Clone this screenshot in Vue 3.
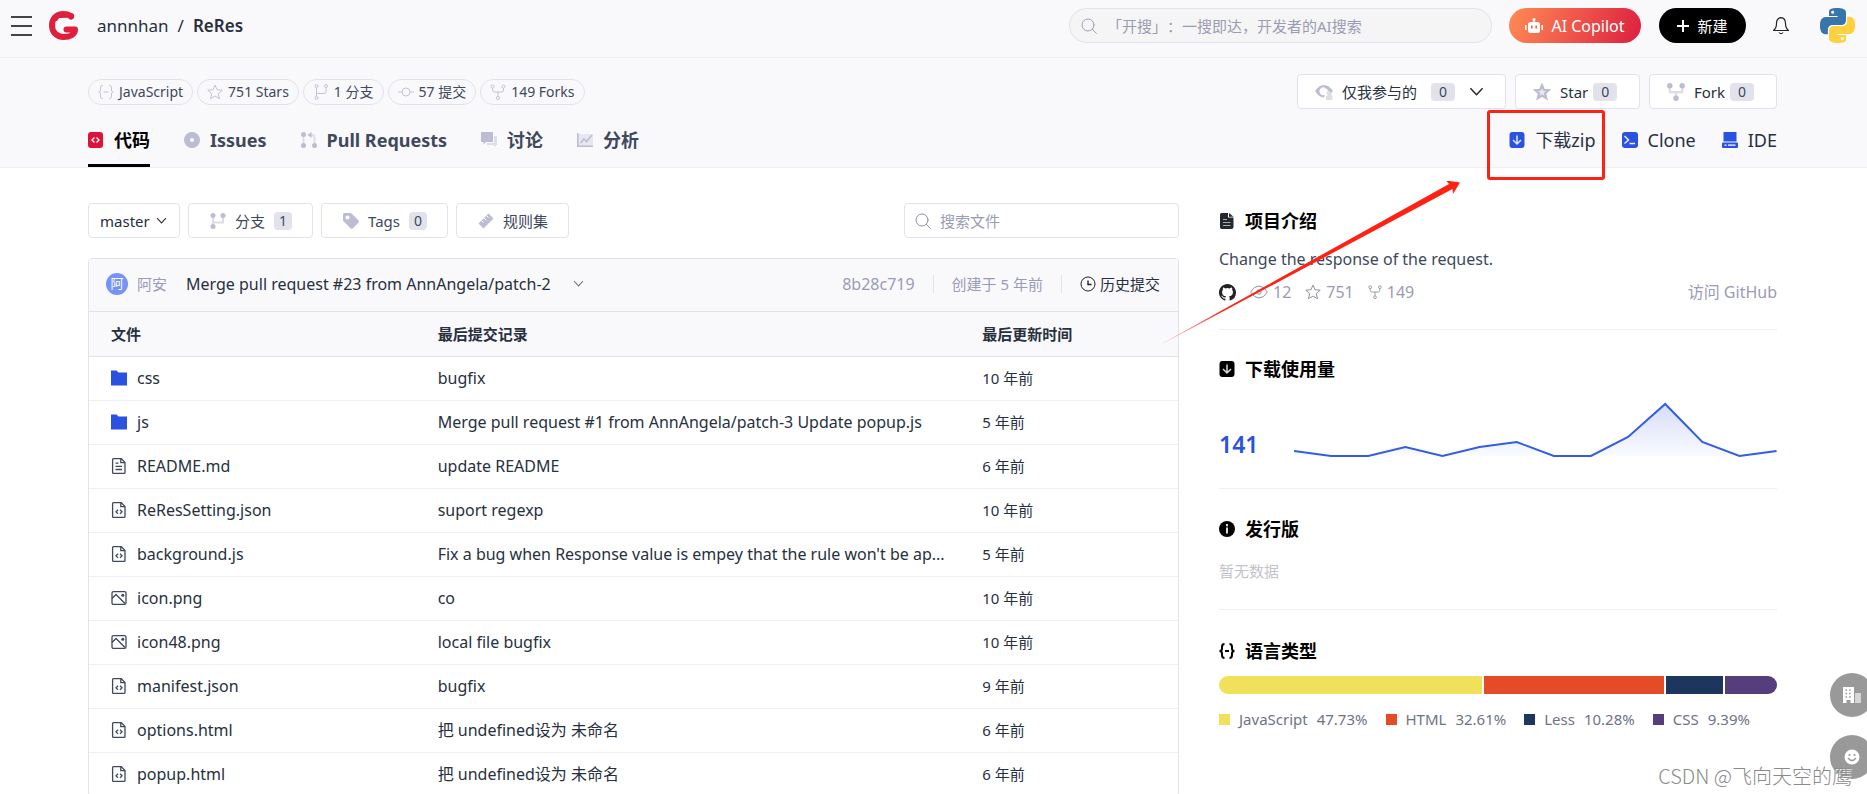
<script setup>
import { ref } from 'vue'

const branch = ref('master')
const keyword = ref('')
const fileKeyword = ref('')

const stats = [
  { icon: 'braces', text: 'JavaScript' },
  { icon: 'star', text: '751 Stars' },
  { icon: 'branch', text: '1 分支' },
  { icon: 'commit', text: '57 提交' },
  { icon: 'fork', text: '149 Forks' },
]

const tabs = [
  { icon: 'code', text: '代码', active: true },
  { icon: 'issue', text: 'Issues' },
  { icon: 'pull', text: 'Pull Requests' },
  { icon: 'chat', text: '讨论' },
  { icon: 'chart', text: '分析' },
]

const refs = [
  { icon: 'branch-solid', text: '分支', count: '1' },
  { icon: 'tag', text: 'Tags', count: '0' },
  { icon: 'ruler', text: '规则集' },
]

const files = [
  { icon: 'folder', name: 'css', message: 'bugfix', time: '10 年前' },
  { icon: 'folder', name: 'js', message: 'Merge pull request #1 from AnnAngela/patch-3 Update popup.js', time: '5 年前' },
  { icon: 'doc', name: 'README.md', message: 'update README', time: '6 年前' },
  { icon: 'doc-code', name: 'ReResSetting.json', message: 'suport regexp', time: '10 年前' },
  { icon: 'doc-code', name: 'background.js', message: "Fix a bug when Response value is empey that the rule won't be ap...", time: '5 年前' },
  { icon: 'image', name: 'icon.png', message: 'co', time: '10 年前' },
  { icon: 'image', name: 'icon48.png', message: 'local file bugfix', time: '10 年前' },
  { icon: 'doc-code', name: 'manifest.json', message: 'bugfix', time: '9 年前' },
  { icon: 'doc-code', name: 'options.html', message: '把 undefined设为 未命名', time: '6 年前' },
  { icon: 'doc-code', name: 'popup.html', message: '把 undefined设为 未命名', time: '6 年前' },
]

const languages = [
  { name: 'JavaScript', share: 47.73, color: '#f1e05a' },
  { name: 'HTML', share: 32.61, color: '#e34c26' },
  { name: 'Less', share: 10.28, color: '#1d365d' },
  { name: 'CSS', share: 9.39, color: '#563d7c' },
]

const usage = [1, 0, 0, 2, 0, 2, 3, 0, 0, 4, 11, 3, 0, 1]
const points = usage.map((v, i) => `${i * 37},${Math.round(54 - v * 4.7)}`).join(' ')
</script>

<template>
  <div class="page">
    <svg class="sprite" aria-hidden="true">
      <symbol id="braces" viewBox="0 0 16 16">
        <path fill="none" stroke="currentColor" stroke-linecap="round" d="M4.500 1.500C2.500 1.500 2.500 2.500 2.500 4v2C2.500 7.300 1.800 8 .7 8c1.100 0 1.800.7 1.800 2v2c0 1.500 0 2.500 2 2.500M11.500 1.500c2 0 2 1 2 2.500v2c0 1.300.7 2 1.800 2-1.100 0-1.800.7-1.800 2v2c0 1.500 0 2.500-2 2.500M6 8h4" />
      </symbol>
      <symbol id="star" viewBox="0 0 16 16">
        <path fill="none" stroke="currentColor" stroke-linejoin="round" d="M8 1l2 4.700 5.200.5-3.900 3.400 1.200 5.100L8 12l-4.500 2.700 1.200-5.100L.8 6.200 6 5.700z" />
      </symbol>
      <symbol id="star-solid" viewBox="0 0 16 16">
        <path fill="currentColor" fill-opacity=".35" stroke="currentColor" stroke-width="2" d="M8 2l1.700 4 4.200.3-3.200 2.900 1 4.300L8 11.200l-3.700 2.300 1-4.300L2.100 6.300 6.300 6z" />
      </symbol>
      <symbol id="branch" viewBox="0 0 16 16">
        <g fill="none" stroke="currentColor"><circle cx="3.500" cy="2" r="1.500" /><circle cx="13" cy="2" r="1.500" /><circle cx="3.500" cy="14" r="1.500" /><path d="M3.500 3.500v9M3.500 9.500H11a2 2 0 0 0 2-2v-4" /></g>
      </symbol>
      <symbol id="branch-solid" viewBox="0 0 16 16">
        <path fill="none" stroke="currentColor" stroke-opacity=".5" stroke-width="2" d="M3 3v10M3 9.500h10V3" />
        <g fill="currentColor"><circle cx="3" cy="2.500" r="2.500" /><circle cx="13" cy="2.500" r="2.500" /><circle cx="3" cy="13.500" r="2.500" /></g>
      </symbol>
      <symbol id="commit" viewBox="0 0 16 16">
        <g fill="none" stroke="currentColor"><circle cx="8" cy="8" r="4" /><path d="M0 8h4M12 8h4" /></g>
      </symbol>
      <symbol id="fork" viewBox="0 0 16 16">
        <g fill="none" stroke="currentColor"><circle cx="2.500" cy="2.500" r="1.600" /><circle cx="13.500" cy="2.500" r="1.600" /><circle cx="8" cy="14" r="1.600" /><path d="M2.500 4v2q0 2 2 2h7q2 0 2-2V4M8 8v4.400" /></g>
      </symbol>
      <symbol id="fork-solid" viewBox="0 0 16 16">
        <path fill="none" stroke="currentColor" stroke-opacity=".5" stroke-width="2" d="M2.500 3v5h11V3M8 8v6" />
        <g fill="currentColor"><circle cx="2.500" cy="2.500" r="2.400" /><circle cx="13.500" cy="2.500" r="2.400" /><circle cx="8" cy="13.600" r="2.400" /></g>
      </symbol>
      <symbol id="code" viewBox="0 0 16 16">
        <rect width="15" height="16" rx="3" fill="#dc143c" /><path fill="none" stroke="#fff" stroke-width="1.300" d="M6.500 5.500L4 8l2.500 2.500M8.500 5.500L11 8l-2.500 2.500" />
      </symbol>
      <symbol id="issue" viewBox="0 0 16 16"><circle cx="8" cy="8" r="5" fill="none" stroke="currentColor" stroke-width="6" /></symbol>
      <symbol id="pull" viewBox="0 0 16 16">
        <path fill="none" stroke="currentColor" stroke-opacity=".45" stroke-width="2" d="M2.500 3v10M9 3h2q2.500 0 2.500 3v7" />
        <g fill="currentColor"><circle cx="2.500" cy="2.500" r="2.500" /><circle cx="2.500" cy="13.500" r="2.500" /><circle cx="13.500" cy="13.500" r="2.500" /><path d="M10.500 0v6L6.500 3z" /></g>
      </symbol>
      <symbol id="chat" viewBox="0 0 16 16">
        <path fill="currentColor" d="M0 0h12v10H5l-2.500 2.500V10H0z" /><path fill="currentColor" fill-opacity=".45" d="M13 4h3v9h-1.500v2.500L12 13H6v-2h7z" />
      </symbol>
      <symbol id="chart" viewBox="0 0 16 16">
        <path fill="currentColor" fill-opacity=".3" d="M1 2h15v12H1z" /><path fill="none" stroke="currentColor" stroke-width="1.600" d="M.8 1v13.200H16M3.500 11L7 7l2.500 2.500L15 3" />
      </symbol>
      <symbol id="tag" viewBox="0 0 16 16">
        <path fill="currentColor" fill-rule="evenodd" d="M1.500 0H7q1 0 1.600.6l7 7q.8.900 0 1.800l-6 6q-.9.800-1.800 0l-7-7Q0 7.800 0 7V1.500Q0 0 1.500 0zM4.500 2.500a2 2 0 1 0 0 4 2 2 0 0 0 0-4z" />
      </symbol>
      <symbol id="ruler" viewBox="0 0 16 16">
        <path fill="currentColor" d="M10.500.5l5 5-10 10-5-5z" /><path stroke="#fff" d="M8.500 2.500l2 2M6 5l2.500 2.500M3.500 7.500l2 2" />
      </symbol>
      <symbol id="search" viewBox="0 0 16 16"><g fill="none" stroke="currentColor" stroke-linecap="round"><circle cx="7" cy="7" r="6" /><path d="M11.300 11.300L15.500 15.500" /></g></symbol>
      <symbol id="chevron" viewBox="0 0 16 16"><path fill="none" stroke="currentColor" stroke-width="1.500" d="M1.500 4.500L8 11.500l6.500-7" /></symbol>
      <symbol id="folder" viewBox="0 0 16 16"><path fill="#2a52e0" d="M0 .5h5.500L7.500 2.500H16v13H0z" /></symbol>
      <symbol id="doc" viewBox="0 0 16 16">
        <g fill="none" stroke="#40485b" stroke-width="1.300"><path d="M2.500.7h7.800l3.700 3.700v10q0 .9-.9.900H2.500q-.9 0-.9-.9V1.600q0-.9.9-.9z" /><path d="M9.800.7v4H14" /><path d="M4.500 5.200h3M4.500 8.300h6.500M4.500 11.500h6.500" /></g>
      </symbol>
      <symbol id="doc-code" viewBox="0 0 16 16">
        <g fill="none" stroke="#40485b" stroke-width="1.300"><path d="M2.500.7h7.800l3.700 3.700v10q0 .9-.9.900H2.500q-.9 0-.9-.9V1.600q0-.9.9-.9z" /><path d="M9.800.7v4H14" /><path d="M7 7.700L5 9.800l2 2.100M9 7.700l2 2.100-2 2.100" /></g>
      </symbol>
      <symbol id="image" viewBox="0 0 16 16">
        <rect x="1" y="1.600" width="14" height="12.800" rx="1.500" fill="none" stroke="#40485b" stroke-width="1.300" /><path fill="none" stroke="#40485b" stroke-width="1.300" d="M1 8.500l4-4 9 9" /><circle cx="11.800" cy="5.300" r="1.500" fill="#40485b" />
      </symbol>
      <symbol id="download" viewBox="0 0 16 16">
        <rect x=".5" width="15" height="16" rx="3" fill="currentColor" /><path fill="none" stroke="#fff" stroke-opacity=".85" stroke-width="1.500" d="M8 3.500v8M4 8l4 4 4-4" />
      </symbol>
      <symbol id="terminal" viewBox="0 0 16 16">
        <rect width="16" height="16" rx="3" fill="currentColor" /><path fill="none" stroke="#fff" stroke-width="1.500" stroke-opacity=".9" d="M2.500 4L6.500 8l-4 3.500M7.500 11.500H13" />
      </symbol>
      <symbol id="ide" viewBox="0 0 16 16"><path fill="currentColor" d="M1.500 0h13v9.500h-13zM1 10.500h14q1 0 1 1V15q0 1-1 1H1q-1 0-1-1v-3.500q0-1 1-1z" /><path stroke="#fff" stroke-width="1.300" d="M2.500 13.200h2M6 13.200h7.500" /></symbol>
    </svg>

    <header class="topbar">
      <button class="menu" type="button" aria-label="菜单"><i></i><i></i><i></i></button>
      <a class="logo" href="#" aria-label="Gitee">
        <svg viewBox="0 0 29 29" width="29" height="29"><path fill="none" stroke="#e01f3d" stroke-width="6" stroke-linecap="round" stroke-linejoin="round" d="M22 5Q18.500 3 14.500 3C7 3 3 8 3 14.500S7.500 26 14.500 26 26 23 26 18.500H17.500" /><path fill="#e01f3d" d="M4 9L12 1l12 1.500q2.500 3 0 5.500-3 2-5-1.500l-6 .5-3 0-2 3z" /></svg>
      </a>
      <nav class="crumbs"><a href="#">annnhan</a><span>/</span><a href="#" class="repo">ReRes</a></nav>
      <label class="global-search">
        <svg class="ic16"><use href="#search" /></svg>
        <input v-model="keyword" type="text" aria-label="搜索" placeholder="「开搜」：一搜即达，开发者的AI搜索" />
      </label>
      <button class="copilot" type="button">
        <svg viewBox="0 0 18 16" width="18" height="16"><path fill="#fff" d="M5.500 4h7q2.500 0 2.500 2.500v6q0 2.500-2.500 2.500h-7Q3 15 3 12.500v-6Q3 4 5.500 4zM0 7h1.500v5H0zM16.500 7H18v5h-1.500zM8.300 1h1.400v3H8.300z" /><circle cx="9" cy="1.500" r="1.500" fill="#fff" /><path stroke="#f0674e" stroke-width="1.600" d="M6.800 7.500v3M11.200 7.500v3" /></svg>
        AI Copilot
      </button>
      <button class="create" type="button">
        <svg viewBox="0 0 12 12" width="12" height="12"><path stroke="#fff" stroke-width="2" d="M6 0v12M0 6h12" /></svg>
        新建
      </button>
      <button class="bell" type="button" aria-label="通知">
        <svg viewBox="0 0 16 18" width="16" height="18"><path fill="none" stroke="#222" stroke-width="1.200" d="M8 .7C4.500 1 3.500 3.500 3.500 6.500c0 4-1 5.500-3 7h15c-2-1.500-3-3-3-7C12.500 3.500 11.500 1 8 .7zM6 15.500q2 2.500 4 0" /></svg>
      </button>
      <a class="avatar" href="#" aria-label="个人主页">
        <svg viewBox="0 0 24 24" width="35" height="35">
          <defs><path id="py" d="M14.250.18l.9.2.73.26.59.3.45.32.34.34.25.34.16.33.1.3.04.26.02.2-.01.13V8.500l-.05.63-.13.55-.21.46-.26.38-.3.31-.33.25-.35.19-.35.14-.33.1-.3.07-.26.04-.21.02H8.770l-.69.05-.59.14-.5.22-.41.27-.33.32-.27.35-.2.36-.15.37-.1.35-.07.32-.04.27-.02.21v3.060H3.170l-.21-.03-.28-.07-.32-.12-.35-.18-.36-.26-.36-.36-.35-.46-.32-.59-.28-.73-.21-.88-.14-1.050-.05-1.230.06-1.220.16-1.040.24-.87.32-.71.36-.57.4-.44.42-.33.42-.24.4-.16.36-.1.32-.05.24-.01h.16l.06.01h8.160v-.83H6.180l-.01-2.750-.02-.37.05-.34.11-.31.17-.28.25-.26.31-.23.38-.2.44-.18.51-.15.58-.12.64-.1.71-.06.77-.04.84-.02 1.270.05zm-6.300 1.980l-.23.33-.08.41.08.41.23.34.33.22.41.09.41-.09.33-.22.23-.34.08-.41-.08-.41-.23-.33-.33-.22-.41-.09-.41.09z" /></defs>
          <circle cx="12" cy="12" r="12" fill="#fff" /><use href="#py" fill="#3776ab" /><use href="#py" fill="#ffd040" transform="rotate(180 12 12)" />
        </svg>
      </a>
    </header>

    <section class="hero">
      <div class="hero-row">
        <ul class="pills">
          <li v-for="s in stats" :key="s.icon"><svg class="ic16"><use :href="'#' + s.icon" /></svg>{{ s.text }}</li>
        </ul>
        <div class="actions">
          <button type="button" class="watch">
            <svg viewBox="0 0 18 16" width="18" height="16"><path fill="currentColor" d="M0 7Q4 1 9 1t9 6l-2 1.500-3-2.500-3.500-2.500A4 4 0 1 0 10 11l-1 2.500Q4 13.500 0 7z" /><path fill="currentColor" fill-opacity=".5" d="M11 16v-3q0-2 2-2a2.500 2.500 0 1 1 2.500 0q2 0 2 2v3z" /></svg>
            仅我参与的<b>0</b><svg class="caret"><use href="#chevron" /></svg>
          </button>
          <button type="button" class="star"><svg class="ic18"><use href="#star-solid" /></svg>Star<b>0</b></button>
          <button type="button" class="forks"><svg class="ic18"><use href="#fork-solid" /></svg>Fork<b>0</b></button>
        </div>
      </div>
      <div class="hero-row tabs-row">
        <nav class="tabs">
          <a v-for="t in tabs" :key="t.icon" href="#" :class="{ active: t.active }"><svg class="ic16"><use :href="'#' + t.icon" /></svg>{{ t.text }}</a>
        </nav>
        <nav class="tools">
          <a href="#" class="zip"><svg class="ic16"><use href="#download" /></svg>下载zip<span class="frame"></span></a>
          <a href="#"><svg class="ic16"><use href="#terminal" /></svg>Clone</a>
          <a href="#"><svg class="ic16"><use href="#ide" /></svg>IDE</a>
        </nav>
      </div>
    </section>

    <main class="content">
      <div class="primary">
        <div class="toolbar">
          <label class="branch"><select v-model="branch" aria-label="分支"><option>master</option></select><svg><use href="#chevron" /></svg></label>
          <a v-for="r in refs" :key="r.icon" href="#" class="ref"><svg class="ic16"><use :href="'#' + r.icon" /></svg>{{ r.text }}<b v-if="r.count">{{ r.count }}</b></a>
          <label class="file-search"><svg class="ic16"><use href="#search" /></svg><input v-model="fileKeyword" type="text" aria-label="搜索文件" placeholder="搜索文件" /></label>
        </div>

        <div class="listing">
          <div class="last-commit">
            <span class="face">阿</span><a href="#" class="muted author">阿安</a>
            <a href="#" class="subject">Merge pull request #23 from AnnAngela/patch-2</a>
            <button type="button" aria-label="展开"><svg width="11" height="11"><use href="#chevron" /></svg></button>
            <span class="meta muted hash">8b28c719</span>
            <span class="meta muted">创建于 5 年前</span>
            <a href="#" class="meta history"><svg viewBox="0 0 16 16" class="ic16"><g fill="none" stroke="#222"><circle cx="8" cy="8" r="7" /><path stroke-width="1.400" d="M8 4.500V8.500h3.500" /></g></svg>历史提交</a>
          </div>
          <table>
            <thead><tr><th class="c-name">文件</th><th class="c-msg">最后提交记录</th><th>最后更新时间</th></tr></thead>
            <tbody>
              <tr v-for="f in files" :key="f.name">
                <td><a href="#" class="file"><svg class="ic16"><use :href="'#' + f.icon" /></svg>{{ f.name }}</a></td>
                <td><a href="#">{{ f.message }}</a></td>
                <td class="time">{{ f.time }}</td>
              </tr>
            </tbody>
          </table>
        </div>
      </div>

      <aside class="side">
        <section class="about">
          <h2><svg viewBox="0 0 16 16" class="ic16"><path fill="#24292f" d="M2.500 0H9v4.500h5.500V14q0 2-2 2h-10q-1.500 0-1.500-2V1.500Q1 0 2.500 0zM10 0l4.500 3.700H10z" /><path stroke="#aaa" d="M4 6.500h4M4 9.500h7.500M4 12.500h7.500" /></svg>项目介绍</h2>
          <p class="intro">Change the response of the request.</p>
          <div class="upstream">
            <svg viewBox="0 0 16 16" width="17" height="17"><path fill="#222" d="M8 0C3.580 0 0 3.580 0 8c0 3.540 2.290 6.530 5.470 7.590.4.070.55-.17.55-.38 0-.19-.01-.82-.01-1.490-2.010.37-2.530-.49-2.690-.94-.09-.23-.48-.94-.82-1.130-.28-.15-.68-.52-.01-.53.63-.01 1.080.58 1.230.82.72 1.210 1.870.87 2.330.66.070-.52.28-.87.51-1.070-1.780-.2-3.640-.89-3.640-3.950 0-.87.31-1.590.82-2.150-.08-.2-.36-1.020.08-2.120 0 0 .67-.21 2.200.82a7.600 7.600 0 0 1 4 0c1.530-1.040 2.200-.82 2.200-.82.44 1.100.16 1.920.08 2.120.51.56.82 1.270.82 2.150 0 3.070-1.870 3.750-3.650 3.950.29.25.54.73.54 1.480 0 1.070-.01 1.930-.01 2.200 0 .21.15.46.55.38A8 8 0 0 0 16 8c0-4.420-3.580-8-8-8z" /></svg>
            <span><svg viewBox="0 0 18 16" width="18" height="16"><g fill="none" stroke="currentColor"><path d="M.7 8Q4 2 9 2t8.300 6Q14 14 9 14T.7 8z" /><circle cx="9" cy="8" r="2.200" /></g></svg>12</span>
            <span><svg class="ic16"><use href="#star" /></svg>751</span>
            <span><svg width="14" height="14"><use href="#fork" /></svg>149</span>
            <a href="#">访问 GitHub</a>
          </div>
        </section>
        <section class="downloads">
          <h2><svg class="ic16"><use href="#download" /></svg>下载使用量</h2>
          <div class="usage">
            <strong>141</strong>
            <svg viewBox="0 0 481 56" preserveAspectRatio="none">
              <defs><linearGradient id="fade" x1="0" y1="0" x2="0" y2="1"><stop offset="0" stop-color="#d5dcf9" /><stop offset="1" stop-color="#fafbff" /></linearGradient></defs>
              <polygon :points="'0,54 ' + points + ' 481,54'" fill="url(#fade)" /><polyline :points="points" fill="none" stroke="#355ce4" stroke-width="2" />
            </svg>
          </div>
        </section>
        <section class="release">
          <h2><svg viewBox="0 0 16 16" class="ic16"><circle cx="8" cy="8" r="8" /><path stroke="#ddd" stroke-width="2" d="M8 3v2.200M8 6.500v6" /></svg>发行版</h2>
          <p class="empty">暂无数据</p>
        </section>
        <section class="langs">
          <h2><svg viewBox="0 0 16 16" class="ic16"><path fill="none" stroke="#000" stroke-width="2" d="M5.500 1Q3 1 3 4v1.500Q3 8 .5 8 3 8 3 10.500V12q0 3 2.500 3M10.500 1Q13 1 13 4v1.500Q13 8 15.500 8 13 8 13 10.500V12q0 3-2.500 3M6 8h4" /></svg>语言类型</h2>
          <div class="bar"><i v-for="l in languages" :key="l.name" :style="{ flexGrow: l.share, background: l.color }"></i></div>
          <ul><li v-for="l in languages" :key="l.name"><i :style="{ background: l.color }"></i><span>{{ l.name }}</span><span>{{ l.share }}%</span></li></ul>
        </section>
      </aside>
      <svg class="arrow" viewBox="0 0 300 164" width="300" height="164" aria-hidden="true">
        <defs><linearGradient id="ink" gradientUnits="userSpaceOnUse" x1="0" y1="162" x2="60" y2="130"><stop offset="0" stop-color="#fe2215" stop-opacity=".2" /><stop offset="1" stop-color="#fe2215" /></linearGradient></defs>
        <path fill="url(#ink)" d="M1 162L287 3l-3-3.500L298 1.500 291 13l-.5-5L1 162.500z" />
      </svg>
    </main>

    <div class="float">
      <button type="button" aria-label="企业版"><svg viewBox="0 0 18 16" width="18" height="16"><path fill="#fff" d="M0 0h11v16H7.500v-3h-4v3H0z" /><path fill="#fff" fill-opacity=".6" d="M12 6h6v10h-6z" /><path stroke="#999" stroke-width="1.600" stroke-dasharray="1.600 2" d="M2.500 3h7M2.500 6.500h7M2.500 10h7" /></svg></button>
      <button type="button" aria-label="反馈"><svg class="ic16" viewBox="0 0 16 16"><circle cx="8" cy="8" r="7.500" fill="#fff" /><g fill="#999"><circle cx="5.500" cy="6" r="1.100" /><circle cx="10.500" cy="6" r="1.100" /></g><path fill="none" stroke="#999" stroke-width="1.300" d="M4 9q4 5 8 0" /></svg></button>
    </div>
    <div class="watermark">CSDN @飞向天空的鹰</div>
  </div>
</template>

<style>
body { margin: 0; background: #fff; }
</style>

<style scoped>
.page {
  position: relative; height: 100vh; overflow: hidden; background: #fff; color: #27303d;
  font-family: "Noto Sans", "Noto Sans CJK SC", sans-serif; font-size: 15px; line-height: 20px;
}
.page * { box-sizing: border-box; }
.sprite { position: absolute; width: 0; height: 0; }
svg { display: block; flex: none; }
a { color: inherit; text-decoration: none; }
button, input, select { font: inherit; color: inherit; margin: 0; padding: 0; border: 0; background: none; outline: 0; }
ul { list-style: none; margin: 0; padding: 0; }
.ic16 { width: 16px; height: 16px; }
.ic18 { width: 18px; height: 18px; }
.muted { color: #9a9bb4; }

.topbar { display: flex; align-items: center; height: 58px; padding: 0 12px 6px 11px; background: #f9f9fc; border-bottom: 1px solid #efeff5; }
.menu { display: flex; flex-direction: column; gap: 7px; width: 21px; }
.menu i { height: 2px; background: #444; }
.logo { margin-left: 17px; }
.crumbs { display: flex; gap: 9px; margin-left: 19px; font-size: 17px; line-height: 24px; }
.repo { font-weight: 600; }
.global-search { display: flex; align-items: center; gap: 10px; width: 423px; height: 35px; margin-left: auto; padding: 0 11px; border: 1px solid #e2e2ee; border-radius: 18px; background: #f5f5f5; color: #a0a0b8; text-spacing-trim: space-all; }
.global-search input, .file-search input { flex: 1; min-width: 0; }
input::placeholder { color: #9a9bb4; opacity: 1; }
.copilot, .create { display: flex; align-items: center; justify-content: center; gap: 8px; height: 35px; border-radius: 18px; color: #fff; }
.copilot { width: 132px; margin-left: 17px; background: linear-gradient(110deg, #ff8b55, #dc1f3f); font-size: 16px; }
.create { width: 87px; margin-left: 18px; background: #000; }
.bell { margin-left: 27px; }
.avatar { margin-left: 31px; }

.hero { padding: 16px 90px 0 88px; background: #f9f9fc; border-bottom: 1px solid #efeff5; }
.hero-row { display: flex; justify-content: space-between; align-items: center; }
.pills { display: flex; gap: 4px; font-size: 14px; }
.pills li { display: flex; align-items: center; gap: 5px; height: 26px; padding: 0 9px; border: 1px solid #e2e2ee; border-radius: 13px; color: #40485b; }
.pills svg { color: #c3c3d8; }
.actions { display: flex; gap: 9px; }
.actions button { display: flex; align-items: center; height: 35px; border: 1px solid #e2e2ee; border-radius: 4px; background: #fff; padding-left: 17px; }
.actions svg { margin-right: 9px; color: #bcbcd2; }
b { padding: 0 5px; border-radius: 4px; background: #e2e2ec; color: #40485b; font-size: 14px; line-height: 18px; font-weight: 400; }
.actions .watch { width: 209px; padding-left: 17px; }
.watch b { margin-left: 14px; padding: 0 8px; }
.actions .caret { width: 15px; height: 15px; margin: 0 0 0 14px; color: #222; }
.actions .star { width: 125px; }
.actions .forks { width: 128px; }
.star b, .forks b { margin-left: 5px; padding: 0 8px; }
.tabs-row { margin-top: 4px; }
.tabs, .tools { display: flex; font-size: 18px; }
.tabs { gap: 34px; color: #40485b; font-weight: 700; }
.tabs a, .tools a { display: flex; align-items: center; gap: 10px; height: 54px; }
.tabs a { padding-top: 2px; border-bottom: 3px solid transparent; }
.tabs svg { color: #bcbcd2; }
.tabs .active { color: #000; border-color: #000; }
.tools { gap: 26px; }
.tools svg { color: #2a52e0; }
.zip { position: relative; }
.frame { position: absolute; inset: -3px -9px -13px -22px; border: 3px solid #fe2215; border-radius: 3px; }

.content { position: relative; display: flex; gap: 40px; padding: 35px 90px 0 88px; }
.primary { flex: 1; min-width: 0; }
.side { width: 34%; max-width: 558px; }
.toolbar { display: flex; gap: 8px; height: 35px; margin-bottom: 20px; }
.branch, .ref, .file-search { display: flex; align-items: center; border: 1px solid #e2e2ee; border-radius: 4px; }
.branch { position: relative; width: 92px; }
.branch select { width: 100%; height: 33px; padding-left: 11px; appearance: none; }
.branch svg { position: absolute; right: 12px; width: 11px; height: 11px; pointer-events: none; }
.ref { gap: 9px; padding: 0 20px 0 21px; color: #40485b; }
.ref svg { color: #bcbcd2; }
.file-search { gap: 9px; width: 275px; margin-left: auto; padding: 0 10px; color: #8c92a4; }

.listing { border: 1px solid #e2e2ec; border-radius: 4px; overflow: hidden; }
.last-commit { display: flex; align-items: center; height: 53px; padding: 0 18px 3px 17px; background: #f9f9fc; border-bottom: 1px solid #e2e2ec; }
.face { width: 22px; height: 22px; border-radius: 50%; background: #7893f7; color: #fff; font-size: 13px; line-height: 21px; text-align: center; }
.author { margin: 0 19px 0 9px; }
.subject, .hash, td, .intro, .upstream { font-size: 16px; }
.last-commit button { margin: 0 auto 0 22px; color: #777; }
.meta { padding-left: 18px; line-height: 18px; }
.meta + .meta { margin-left: 18px; border-left: 1px solid #e2e2ec; }
.history { display: flex; align-items: center; gap: 4px; }
table { width: 100%; table-layout: fixed; border-collapse: collapse; }
th, td { padding: 0 0 0 22px; text-align: left; white-space: nowrap; }
th { height: 44px; background: #f9f9fc; border-bottom: 1px solid #e2e2ec; font-weight: 700; }
td { height: 44px; border-bottom: 1px solid #efeff3; }
td.time { font-size: 15px; }
tr:last-child td { border-bottom: 0; }
.c-name { width: 30%; }
.c-msg { width: 50%; }
.file { display: flex; align-items: center; gap: 10px; }

.side section { border-bottom: 1px solid #efeff3; }
h2 { display: flex; align-items: center; gap: 10px; margin: 0; font-size: 18px; line-height: 26px; font-weight: 700; color: #000; }
.about { height: 127px; padding-top: 5px; }
.intro { margin: 15px 0 0; color: #40485b; }
.upstream { display: flex; align-items: center; margin-top: 13px; color: #9a9bb4; }
.upstream span { display: flex; align-items: center; gap: 5px; margin-left: 14px; }
.upstream svg { color: #8c92a4; }
.upstream a { margin-left: auto; }
.downloads { height: 159px; padding-top: 26px; }
.usage { display: flex; align-items: center; gap: 36px; margin-top: 20px; }
.usage strong { padding-top: 28px; color: #2a52e0; font-size: 23px; line-height: 28px; font-weight: 600; }
.usage svg { flex: 1; min-width: 0; height: 56px; }
.release { height: 121px; padding-top: 27px; }
.empty { margin: 19px 0 0; color: #c3c3cc; }
.side .langs { padding-top: 28px; border: 0; }
.bar { display: flex; gap: 2px; height: 18px; margin-top: 12px; border-radius: 9px; overflow: hidden; }
.bar i { flex-basis: 0; }
.langs ul { display: flex; gap: 18px; margin-top: 15px; color: #6d7385; }
.langs li { display: flex; align-items: center; gap: 9px; }
.langs li i { width: 11px; height: 11px; }

.arrow { position: absolute; top: 13px; right: 405px; pointer-events: none; }
.float { position: absolute; right: -7px; bottom: 15px; display: flex; flex-direction: column; gap: 18px; }
.float button { display: flex; align-items: center; justify-content: center; width: 44px; height: 44px; border-radius: 50%; background: #999; }
.watermark { position: absolute; right: 15px; bottom: 4px; color: #8a8a8a; font-family: "Noto Sans CJK SC", sans-serif; font-weight: 300; font-size: 20px; line-height: 28px; text-shadow: 1px 1px 1px #fff; }
</style>
